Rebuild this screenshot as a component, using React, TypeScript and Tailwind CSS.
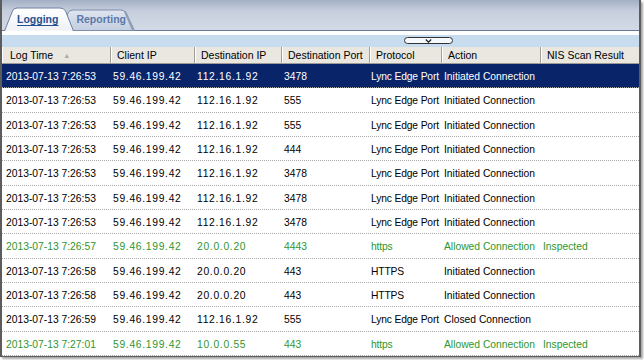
import React from 'react';

type Row = {
  time: string;
  client: string;
  dest: string;
  port: string;
  proto: string;
  action: string;
  nis?: string;
  green?: boolean;
  selected?: boolean;
};

const ROWS: Row[] = [
  { time: '2013-07-13 7:26:53', client: '59.46.199.42', dest: '112.16.1.92', port: '3478', proto: 'Lync Edge Port', action: 'Initiated Connection', selected: true },
  { time: '2013-07-13 7:26:53', client: '59.46.199.42', dest: '112.16.1.92', port: '555', proto: 'Lync Edge Port', action: 'Initiated Connection' },
  { time: '2013-07-13 7:26:53', client: '59.46.199.42', dest: '112.16.1.92', port: '555', proto: 'Lync Edge Port', action: 'Initiated Connection' },
  { time: '2013-07-13 7:26:53', client: '59.46.199.42', dest: '112.16.1.92', port: '444', proto: 'Lync Edge Port', action: 'Initiated Connection' },
  { time: '2013-07-13 7:26:53', client: '59.46.199.42', dest: '112.16.1.92', port: '3478', proto: 'Lync Edge Port', action: 'Initiated Connection' },
  { time: '2013-07-13 7:26:53', client: '59.46.199.42', dest: '112.16.1.92', port: '3478', proto: 'Lync Edge Port', action: 'Initiated Connection' },
  { time: '2013-07-13 7:26:53', client: '59.46.199.42', dest: '112.16.1.92', port: '3478', proto: 'Lync Edge Port', action: 'Initiated Connection' },
  { time: '2013-07-13 7:26:57', client: '59.46.199.42', dest: '20.0.0.20', port: '4443', proto: 'https', action: 'Allowed Connection', nis: 'Inspected', green: true },
  { time: '2013-07-13 7:26:58', client: '59.46.199.42', dest: '20.0.0.20', port: '443', proto: 'HTTPS', action: 'Initiated Connection' },
  { time: '2013-07-13 7:26:58', client: '59.46.199.42', dest: '20.0.0.20', port: '443', proto: 'HTTPS', action: 'Initiated Connection' },
  { time: '2013-07-13 7:26:59', client: '59.46.199.42', dest: '112.16.1.92', port: '555', proto: 'Lync Edge Port', action: 'Closed Connection' },
  { time: '2013-07-13 7:27:01', client: '59.46.199.42', dest: '10.0.0.55', port: '443', proto: 'https', action: 'Allowed Connection', nis: 'Inspected', green: true },
];

// Tab outlines for the Logging / Reporting strip
function TabShapes() {
  return (
    <svg className="absolute left-0 top-0" width="200" height="31" viewBox="0 0 200 31">
      <defs>
        <linearGradient id="tabOn" x1="0" y1="0" x2="0" y2="1">
          <stop offset="0" stopColor="#ffffff" />
          <stop offset="1" stopColor="#eef1f6" />
        </linearGradient>
        <linearGradient id="tabOff" x1="0" y1="0" x2="0" y2="1">
          <stop offset="0" stopColor="#dfe5ef" />
          <stop offset="1" stopColor="#c3cee0" />
        </linearGradient>
      </defs>
      <path d="M62 30.5 L66 13 Q67 10 71 10 L119 10 Q122 10 124 13 L132.5 30.5 Z" fill="url(#tabOff)" stroke="#7d8eab" />
      <path d="M123 11.5 L131 30" stroke="#8f9db6" strokeWidth="2" fill="none" />
      <path d="M2.5 31 L10.5 11 Q11.5 8 15 8 L58 8 Q62 8 63.5 11 L71.5 31 Z" fill="url(#tabOn)" stroke="#6c80a2" />
      <rect x="3.5" y="30" width="67" height="1" fill="#f4f6f9" />
    </svg>
  );
}

const COLS = [109, 84, 87, 88, 72, 99, 98];
const HEADERS = ['Log Time', 'Client IP', 'Destination IP', 'Destination Port', 'Protocol', 'Action', 'NIS Scan Result'];

export default function App() {
  return (
    <div className="w-[644px] h-[360px] bg-white font-['Liberation_Sans',Arial,sans-serif]">
      <div className="w-[641px] h-[357px] border-l-2 border-r-2 border-b border-[#5c5c5c] shadow-[2px_2px_2px_rgba(0,0,0,0.35)] flex flex-col overflow-hidden bg-white">
        {/* Tab strip */}
        <div className="relative h-[31px] shrink-0 bg-[linear-gradient(#a3afc4,#c6cedd_35%,#d4dbe7)]">
          <div className="absolute left-0 right-0 bottom-0 h-px bg-[#687a99]" />
          <TabShapes />
          <div className="relative flex pt-[14px] text-[10.5px] leading-[11px] font-bold">
            <span className="ml-[15px] text-[#24508f] underline underline-offset-[2px]">Logging</span>
            <span className="ml-[18px] text-[#5a78a8]">Reporting</span>
          </div>
        </div>
        <div className="h-[4px] shrink-0 bg-white" />

        {/* Collapse bar */}
        <div className="h-[12px] shrink-0 bg-[#c8dcf0] pt-[2px]">
          <div className="ml-[402px] w-[49px] h-[7px] rounded-full border border-[#333] bg-[#f5f8fc] flex items-center justify-center">
            <svg width="7" height="4" viewBox="0 0 7 4">
              <path d="M0.8 0.5 L3.5 3.2 L6.2 0.5" stroke="#222" strokeWidth="1.2" fill="none" />
            </svg>
          </div>
        </div>

        {/* Column headers */}
        <div className="h-[17px] shrink-0 flex bg-[#e9e7e0] border-b border-[#9c9b95] text-[10.5px] text-black">
          {HEADERS.map((h, i) => (
            <div
              key={h}
              style={{ width: COLS[i] }}
              className={`flex items-center pt-[2px] shrink-0 whitespace-nowrap shadow-[inset_1px_0_0_#ffffff] ${i === 0 ? 'pl-[8px]' : 'pl-[6px]'} ${i < 6 ? 'border-r border-[#a09f99]' : ''}`}
            >
              {h}
              {i === 0 && <span className="ml-[10px] text-[7px] text-[#a8a8a8]">▲</span>}
            </div>
          ))}
        </div>

        {/* Rows */}
        <div className="flex flex-col text-[10.3px]">
          {ROWS.map((r, idx) => {
            const color = r.selected ? 'text-white bg-[#0a246a]' : r.green ? 'text-[#2e962e]' : 'text-black';
            const cells = [r.time, r.client, r.dest, r.port, r.proto, r.action, r.nis ?? ''];
            return (
              <div key={idx} className={`h-[24.33px] shrink-0 flex items-center pt-[2px] border-b border-dotted border-[#a8a8a8] ${color}`}>
                {cells.map((c, i) => (
                  <div
                    key={i}
                    style={{ width: COLS[i] }}
                    className={`shrink-0 whitespace-nowrap overflow-visible ${i === 0 ? 'pl-[4px]' : i === 4 ? 'pl-[1px] tracking-[-0.15px]' : 'pl-[2px]'} ${i === 1 || i === 2 ? 'tracking-[0.7px]' : ''}`}
                  >
                    {c}
                  </div>
                ))}
              </div>
            );
          })}
        </div>
      </div>
    </div>
  );
}
